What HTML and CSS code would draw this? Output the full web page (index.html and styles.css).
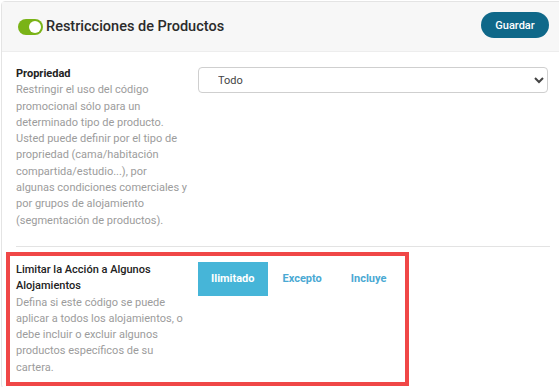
FILE: index.html
```html
<!DOCTYPE html>
<html lang="es">
<head>
    <meta charset="UTF-8">
    <meta name="viewport" content="width=device-width, initial-scale=1.0">
    <title>Restricciones de Productos</title>
    <link rel="stylesheet" href="styles.css">
</head>
<body>
    <div class="card">
        <div class="cardHeader">
            <span class="toggle"><span class="knob"></span></span>
            <h2 class="cardTitle">Restricciones de Productos</h2>
            <button class="saveBtn">Guardar</button>
        </div>

        <div class="section">
            <div class="row">
                <div class="label">
                    <h4>Propriedad</h4>
                    <p>Restringir el uso del código promocional sólo para un determinado tipo de producto. Usted puede definir por el tipo de propriedad (cama/habitación compartida/estudio...), por algunas condiciones comerciales y por grupos de alojamiento (segmentación de productos).</p>
                </div>
                <select class="field">
                    <option>Todo</option>
                </select>
            </div>
            <div class="divider"></div>
        </div>

        <div class="highlight">
            <div class="row">
                <div class="label">
                    <h4 class="medium">Limitar la Acción a Algunos Alojamientos</h4>
                    <p>Defina si este código se puede aplicar a todos los alojamientos, o debe incluir o excluir algunos productos específicos de su cartera.</p>
                </div>
                <div class="choices">
                    <button class="choice active">Ilimitado</button>
                    <button class="choice">Excepto</button>
                    <button class="choice">Incluye</button>
                </div>
            </div>
        </div>
    </div>
</body>
</html>
```

FILE: styles.css
```css
html{
    overflow: hidden;
}
body{
    margin: 0;
    font-family: Roboto, "Liberation Sans", sans-serif;
    font-size: 11px;
    background: #fff;
}
.card{
    margin: 1px -6px 0 1px;
    border: 1px solid #e4e4e4;
    border-radius: 4px;
    padding-bottom: 2px;
}
.cardHeader{
    display: flex;
    align-items: center;
    height: 49px;
    padding: 0 15px 0 16px;
    background: #f7f7f7;
    border-bottom: 1px solid #ededed;
}
.toggle{
    width: 25px;
    height: 16px;
    border-radius: 8px;
    background: #7ab317;
    display: flex;
    align-items: center;
    justify-content: flex-end;
    padding: 0 2px;
    box-sizing: border-box;
}
.knob{
    width: 12px;
    height: 12px;
    border-radius: 50%;
    background: #fff;
}
.cardTitle{
    margin: 0 0 0 3px;
    font-size: 14.5px;
    font-weight: 500;
    color: #2b2b2b;
    flex: 1;
}
.saveBtn{
    height: 26px;
    width: 68px;
    margin-top: -3px;
    border: none;
    border-radius: 13px;
    background: #0f6889;
    color: #fff;
    font-family: inherit;
    font-size: 11px;
    font-weight: 500;
}

.section{
    padding: 14px 14px 0 14px;
}
.row{
    display: grid;
    grid-template-columns: 172px 1fr;
    column-gap: 10px;
    align-items: start;
}
.label h4{
    margin: 0;
    font-size: 11px;
    font-weight: 700;
    line-height: 16.3px;
    color: #222;
}
.label h4.medium{
    font-weight: 500;
}
.label p{
    margin: 0;
    line-height: 16.3px;
    color: #9c9c9c;
}
.field{
    height: 26px;
    margin: 1px 2px 0 0;
    padding-left: 15px;
    border: 1px solid #cfcfcf;
    border-radius: 4px;
    background: #fff;
    font-family: inherit;
    font-size: 11px;
    color: #444;
}
.divider{
    margin-top: 17px;
    border-top: 1px solid #e3e3e3;
}

.highlight{
    margin: 5px 0 0 4px;
    width: 389px;
    border: 4px solid #f04747;
    padding: 6px 0 6px 6px;
}
.choices{
    display: flex;
}
.choice{
    height: 34px;
    padding: 0 14px 0 15px;
    border: none;
    background: none;
    font-family: inherit;
    font-size: 11px;
    font-weight: 700;
    color: #4aa9d3;
}
.choice.active{
    padding: 0 13px;
    background: #46b5d8;
    color: #fff;
}
```
